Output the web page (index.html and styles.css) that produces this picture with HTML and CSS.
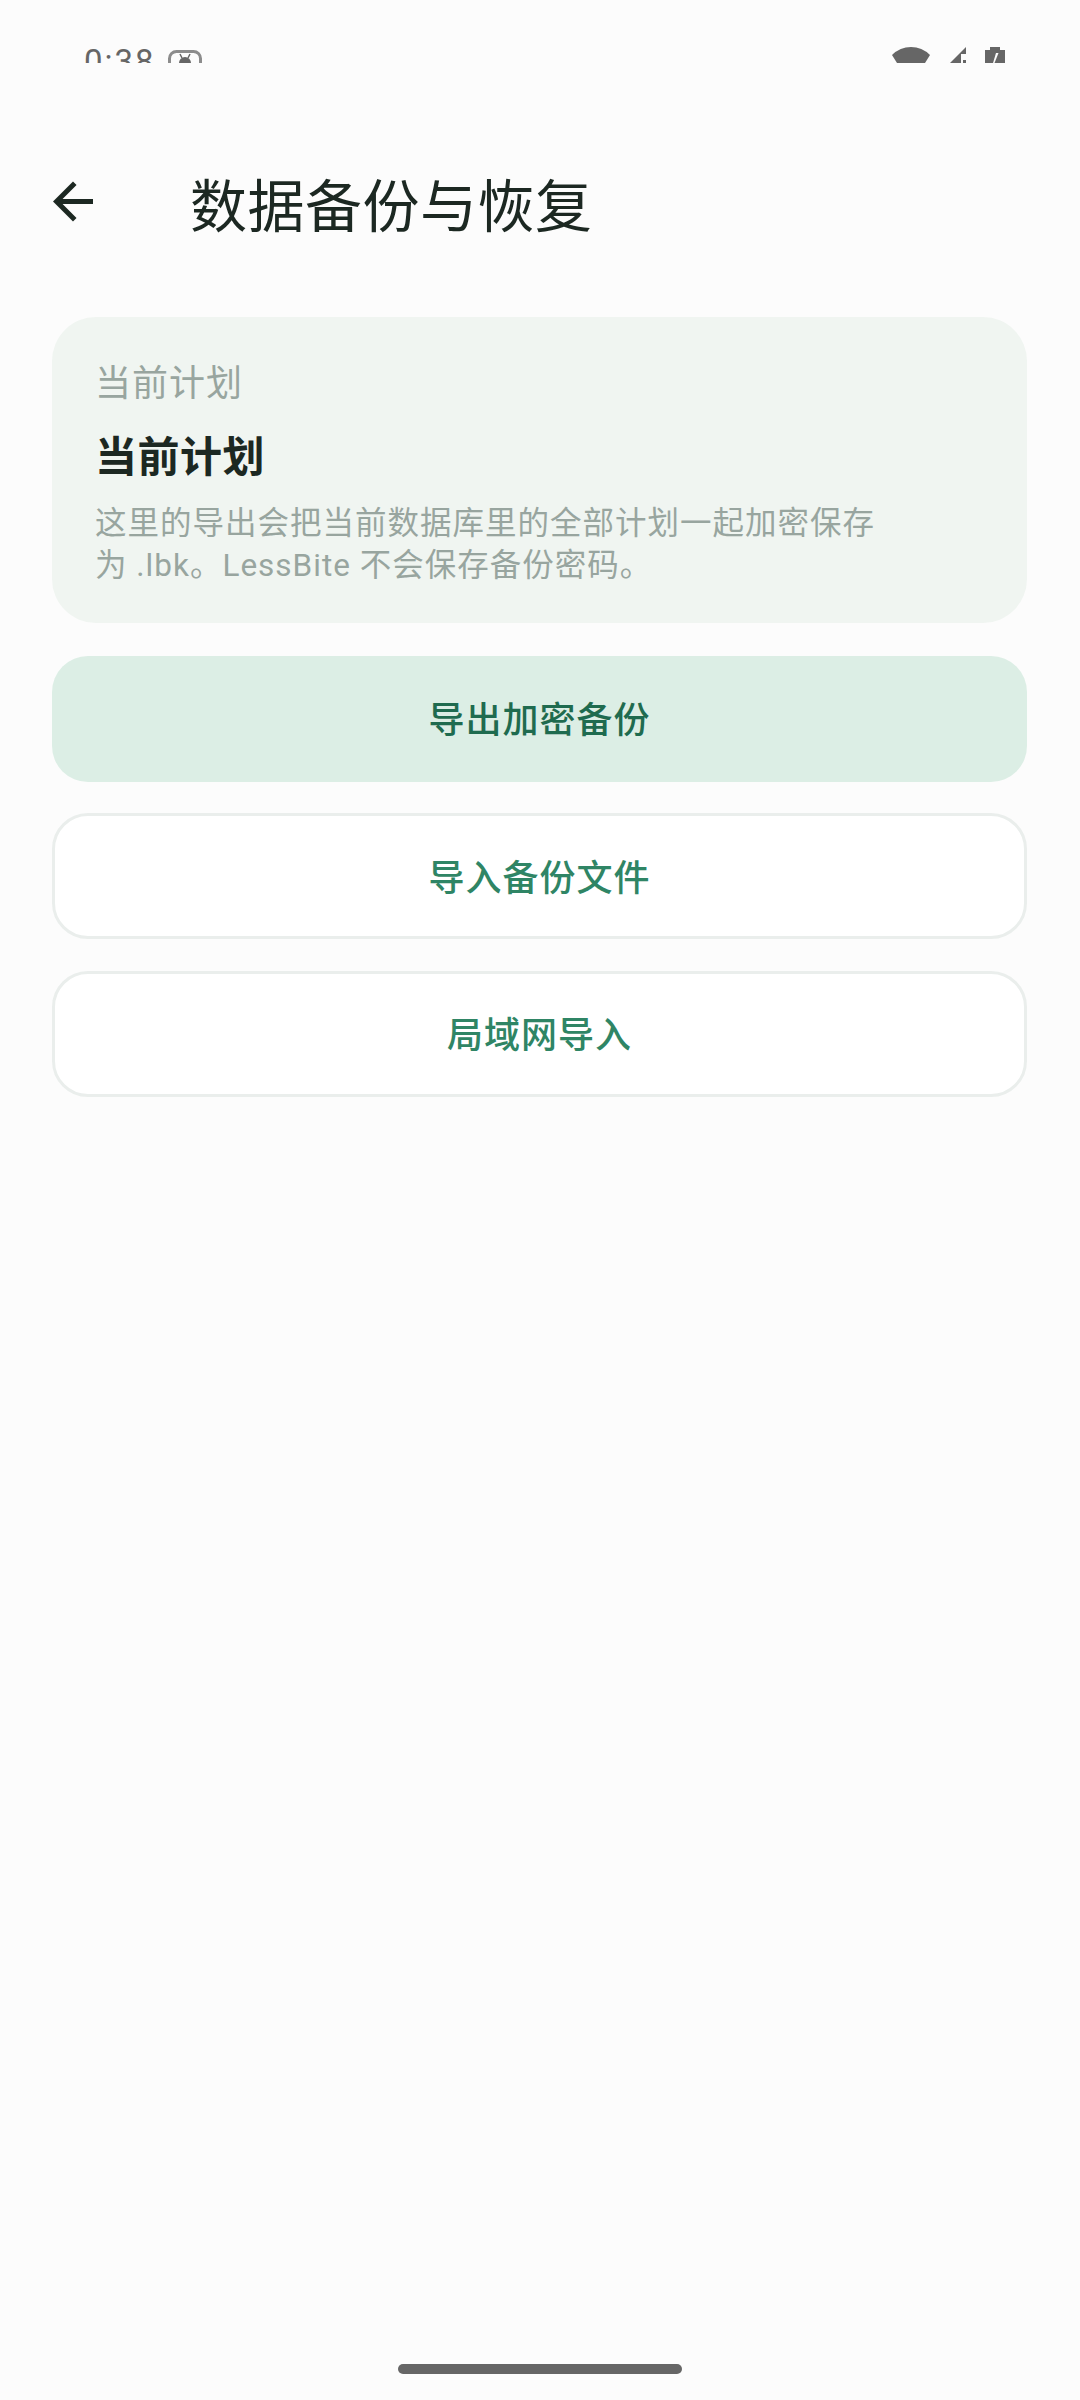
FILE: index.html
```html
<!DOCTYPE html>
<html lang="zh-CN">
<head>
  <meta charset="UTF-8">
  <meta name="viewport" content="width=device-width, initial-scale=1">
  <title>数据备份与恢复</title>
  <link rel="stylesheet" href="styles.css">
</head>
<body>
  <div class="page">
    <div class="status-bar">
      <div class="status-left">
        <span class="clock">0:38</span>
        <svg class="notify-icon" width="34" height="26" viewBox="0 0 34 26">
          <rect x="1.5" y="1.5" width="31" height="23" rx="7" fill="none" stroke="#8c8c8c" stroke-width="3"/>
          <path d="M11 13a6 6 0 0 1 12 0v11H11z" fill="#666"/>
          <path d="M12 4l2 4M22 4l-2 4" stroke="#666" stroke-width="1.5"/>
        </svg>
      </div>
      <div class="status-right">
        <svg width="38" height="16" viewBox="0 0 38 16">
          <path d="M0 8Q8 0 19 0T38 8L33 16H5z" fill="#666"/>
        </svg>
        <svg class="signal-icon" width="16" height="16" viewBox="0 0 16 16">
          <path d="M16 0v7h-5v9H0z" fill="#666"/>
          <path d="M13 13h3v3h-3z" fill="#666"/>
        </svg>
        <svg class="battery-icon" width="20" height="16" viewBox="0 0 20 16">
          <path d="M5 3V0h10v3h5v13H0V3z" fill="#666"/>
          <path d="M11 6h2.5l-4 10H8z" fill="#fcfcfc"/>
        </svg>
      </div>
    </div>

    <header class="top-bar">
      <button class="back-btn" aria-label="返回">
        <svg width="61" height="61" viewBox="0 0 24 24">
          <path d="M20 11H7.83l5.59-5.59L12 4l-8 8 8 8 1.41-1.41L7.83 13H20v-2z" fill="#1c2822"/>
        </svg>
      </button>
      <h1 class="page-title">数据备份与恢复</h1>
    </header>

    <main class="content">
      <section class="plan-card">
        <div class="plan-label">当前计划</div>
        <div class="plan-name">当前计划</div>
        <p class="plan-desc">这里的导出会把当前数据库里的全部计划一起加密保存为 .lbk。LessBite 不会保存备份密码。</p>
      </section>
      <button class="action action-primary">导出加密备份</button>
      <button class="action">导入备份文件</button>
      <button class="action">局域网导入</button>
    </main>

    <div class="home-indicator"></div>
  </div>
</body>
</html>
```

FILE: styles.css
```css
* {
  box-sizing: border-box;
}
body {
  margin: 0;
  background-color: #fcfcfc;
  font-family: Roboto, "Noto Sans CJK SC", sans-serif;
}
.page {
  display: flex;
  flex-direction: column;
  height: 2400px;
  overflow: hidden;
}
.status-bar {
  display: flex;
  justify-content: space-between;
  height: 63px;
  padding: 47px 75px 0 84px;
  overflow: hidden;
  color: #666;
}
.status-left, .status-right {
  display: flex;
  align-items: flex-start;
}
.clock {
  margin-top: 3px;
  font-size: 33px;
  line-height: 24px;
  letter-spacing: 2px;
}
.notify-icon {
  margin: 3px 0 0 12px;
}
.signal-icon {
  margin-left: 20px;
}
.battery-icon {
  margin-left: 19px;
}
.top-bar {
  display: flex;
  align-items: center;
  height: 92px;
  margin-top: 92px;
  padding-left: 43px;
}
.back-btn {
  display: flex;
  width: 60px;
  height: 61px;
  padding: 0;
  border: 0;
  background: none;
}
.page-title {
  margin: 14px 0 0 87px;
  font-size: 57px;
  font-weight: 400;
  line-height: 78px;
  letter-spacing: 0.5px;
  color: #1c2822;
}
.content {
  display: flex;
  flex-direction: column;
  gap: 31.5px;
  margin-top: 70px;
  padding: 0 53px 0 52px;
}
.plan-card {
  height: 306px;
  margin-bottom: 1px;
  padding: 43px 43px 0;
  background-color: #f0f5f1;
  border-radius: 44px;
}
.plan-label {
  font-size: 36px;
  line-height: 48px;
  letter-spacing: 1px;
  color: #98a59f;
}
.plan-name {
  margin-top: 24px;
  font-size: 42px;
  font-weight: 700;
  line-height: 52px;
  letter-spacing: 0.5px;
  color: #1c2822;
}
.plan-desc {
  width: 800px;
  margin: 19px 0 0;
  font-size: 31.5px;
  line-height: 42px;
  letter-spacing: 1px;
  color: #98a59f;
}
.action {
  height: 126px;
  padding: 0 0 3px;
  font-family: inherit;
  font-size: 36px;
  font-weight: 500;
  letter-spacing: 1px;
  color: #2f8565;
  background-color: #fff;
  border: 3px solid #eaeeec;
  border-radius: 36px;
}
.action-primary {
  color: #1f6b4f;
  background-color: #dceee5;
  border: 0;
}
.home-indicator {
  width: 284px;
  height: 10px;
  margin: auto auto 26px;
  background-color: #666;
  border-radius: 5px;
}
```
